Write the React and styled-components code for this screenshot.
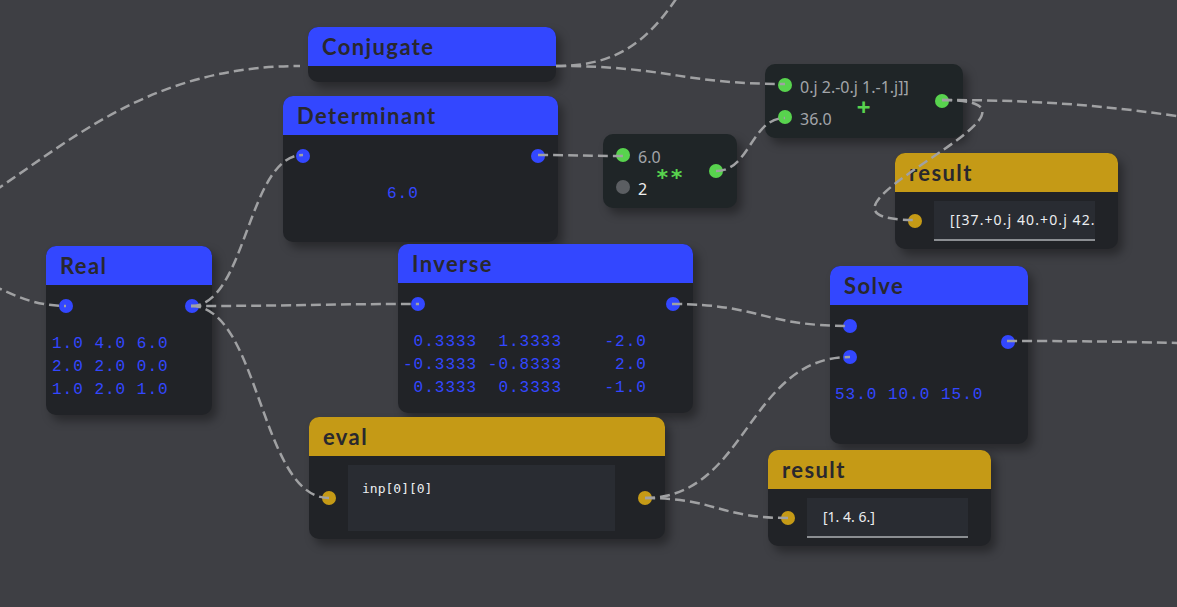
import React from 'react'
import styled, { createGlobalStyle } from 'styled-components'

const colors = {
  canvas: '#3e3f44',
  body: '#212327',
  op: '#1f2527',
  blue: '#3347ff',
  gold: '#c59a16',
  green: '#58d34e',
  grey: '#5b5e62',
  title: '#29282e',
  wire: '#a0a1a3',
  field: '#292c32',
}

const GlobalStyle = createGlobalStyle`
  html, body {
    margin: 0;
    padding: 0;
    background: ${colors.canvas};
  }
  body {
    font-family: 'Noto Sans', sans-serif;
  }
`

const Canvas = styled.div`
  position: relative;
  width: 1177px;
  height: 607px;
  overflow: hidden;
  background: ${colors.canvas};
`

const NodeBox = styled.div`
  position: absolute;
  left: ${({ $x }) => $x}px;
  top: ${({ $y }) => $y}px;
  width: ${({ $w }) => $w}px;
  height: ${({ $h }) => $h}px;
  display: flex;
  flex-direction: column;
  background: ${({ $op }) => ($op ? colors.op : colors.body)};
  border-radius: 10px;
  overflow: hidden;
  box-shadow: 5px 6px 10px rgba(0, 0, 0, 0.35);
`

const Header = styled.div`
  flex: none;
  height: 39px;
  padding-left: 14px;
  background: ${({ $gold }) => ($gold ? colors.gold : colors.blue)};
  color: ${colors.title};
  font-family: Lato, sans-serif;
  font-weight: 700;
  font-size: 22px;
  letter-spacing: 1.4px;
  line-height: 40px;
  white-space: nowrap;
`

const Body = styled.div`
  flex: 1;
  padding-top: 14px;
`

const PortRow = styled.div`
  display: flex;
  justify-content: space-between;
  align-items: center;
  padding: 0 13px;
`

const PortColumn = styled.div`
  display: flex;
  flex-direction: column;
  gap: 17px;
`

const Port = styled.span`
  flex: none;
  width: 14px;
  height: 14px;
  border-radius: 50%;
  background: ${({ $color }) => $color};
`

const Readout = styled.pre`
  margin: 20px 0 0;
  padding-left: ${({ $indent }) => $indent}px;
  font-family: 'Liberation Mono', monospace;
  font-size: 16px;
  letter-spacing: 1px;
  line-height: 23px;
  color: ${colors.blue};
`

/* operator nodes (** and +) */
const OpBody = styled.div`
  position: relative;
  flex: 1;
  display: flex;
  align-items: center;
  justify-content: space-between;
  padding: 0 14px 0 13px;
`

const InputList = styled.div`
  display: flex;
  flex-direction: column;
  gap: 18px;
`

const InputRow = styled.div`
  display: flex;
  align-items: center;
  gap: 8px;
  height: 14px;
`

const InputLabel = styled.span`
  font-family: 'Noto Sans', sans-serif;
  font-size: 16px;
  color: ${({ $bright }) => ($bright ? '#eeeeee' : '#a3a6aa')};
  white-space: nowrap;
  margin-top: 4px;
`

const Operator = styled.div`
  position: absolute;
  inset: 0;
  display: flex;
  align-items: center;
  justify-content: center;
  padding-top: ${({ $drop }) => $drop}px;
  font-family: 'DejaVu Sans Mono', monospace;
  font-weight: 700;
  font-size: 22px;
  letter-spacing: 1px;
  color: ${colors.green};
  pointer-events: none;
`

/* field nodes (eval / result) */
const FieldBody = styled.div`
  flex: 1;
  display: flex;
  align-items: center;
  padding: 8px ${({ $right }) => $right}px 8px 13px;
`

const Field = styled.div`
  flex: ${({ $w }) => ($w ? 'none' : '1')};
  width: ${({ $w }) => ($w ? `${$w}px` : 'auto')};
  height: ${({ $h }) => $h}px;
  margin: 0 auto 0 12px;
  box-sizing: border-box;
  background: ${colors.field};
  border-bottom: ${({ $line }) => ($line ? '2px solid #8b8e92' : 'none')};
  overflow: hidden;
  white-space: nowrap;
`

const FieldText = styled.div`
  padding: ${({ $code }) => ($code ? '14px 14px' : '0 16px')};
  line-height: ${({ $code }) => ($code ? '20px' : '38px')};
  font-family: ${({ $code }) =>
    $code ? "'DejaVu Sans Mono', monospace" : "'Noto Sans', sans-serif"};
  font-size: ${({ $code }) => ($code ? '13px' : '14px')};
  letter-spacing: ${({ $track }) => $track || 0}px;
  color: #eceef0;
`

const WireLayer = styled.svg`
  position: absolute;
  left: 0;
  top: 0;
  width: 1177px;
  height: 607px;
  pointer-events: none;
`

const wires = [
  'M -200 260 C 0 260, 60 66, 300 66',
  'M 556 66 C 630 66, 660 30, 700 -40',
  'M 556 66 C 670 66, 680 84, 785 84',
  'M -90 250 C -20 270, 10 306, 66 306',
  'M 191 306 C 247 306, 247 155, 303 155',
  'M 191 306 C 300 306, 310 304, 419 304',
  'M 191 306 C 260 306, 260 498, 329 498',
  'M 538 155 C 580 155, 582 156, 624 156',
  'M 716 171 C 750 171, 751 118, 785 118',
  'M 942 100 C 1092 100, 765 220, 915 220',
  'M 942 100 C 1060 100, 1140 108, 1260 130',
  'M 672 304 C 761 304, 761 326, 850 326',
  'M 645 498 C 748 498, 747 357, 850 357',
  'M 645 498 C 717 498, 717 518, 789 518',
  'M 1007 341 C 1100 341, 1150 342, 1250 345',
]

const Node = ({ x, y, w, h, title, gold, children }) => (
  <NodeBox $x={x} $y={y} $w={w} $h={h}>
    <Header $gold={gold}>{title}</Header>
    {children}
  </NodeBox>
)

const MatrixNode = ({ x, y, w, h, title, text, indent = 5 }) => (
  <Node x={x} y={y} w={w} h={h} title={title}>
    <Body>
      <PortRow>
        <Port $color={colors.blue} />
        <Port $color={colors.blue} />
      </PortRow>
      <Readout $indent={indent}>{text}</Readout>
    </Body>
  </Node>
)

const OpNode = ({ x, y, w, inputs, op, drop }) => (
  <NodeBox $x={x} $y={y} $w={w} $h={74} $op>
    <OpBody>
      <InputList>
        {inputs.map((input) => (
          <InputRow key={input.label}>
            <Port $color={input.color} />
            <InputLabel $bright={input.bright}>{input.label}</InputLabel>
          </InputRow>
        ))}
      </InputList>
      <Port $color={colors.green} />
      <Operator $drop={drop}>{op}</Operator>
    </OpBody>
  </NodeBox>
)

const ResultNode = ({ x, y, value, track }) => (
  <Node x={x} y={y} w={223} h={96} title="result" gold>
    <FieldBody $right={23}>
      <Port $color={colors.gold} />
      <Field $h={40} $line>
        <FieldText $track={track}>{value}</FieldText>
      </Field>
    </FieldBody>
  </Node>
)

const App = () => (
  <Canvas>
    <GlobalStyle />

    <Node x={308} y={27} w={248} h={55} title="Conjugate" />

    <Node x={283} y={96} w={275} h={146} title="Determinant">
      <Body>
        <PortRow>
          <Port $color={colors.blue} />
          <Port $color={colors.blue} />
        </PortRow>
        <Readout $indent={104}>6.0</Readout>
      </Body>
    </Node>

    <MatrixNode
      x={46}
      y={246}
      w={166}
      h={169}
      title="Real"
      indent={6}
      text={'1.0 4.0 6.0\n2.0 2.0 0.0\n1.0 2.0 1.0'}
    />

    <MatrixNode
      x={398}
      y={244}
      w={295}
      h={169}
      title="Inverse"
      text={' 0.3333  1.3333    -2.0\n-0.3333 -0.8333     2.0\n 0.3333  0.3333    -1.0'}
    />

    <Node x={309} y={417} w={356} h={122} title="eval" gold>
      <FieldBody $right={13}>
        <Port $color={colors.gold} />
        <Field $w={267} $h={66}>
          <FieldText $code>inp[0][0]</FieldText>
        </Field>
        <Port $color={colors.gold} />
      </FieldBody>
    </Node>

    <OpNode
      x={603}
      y={134}
      w={134}
      op="**"
      drop={12}
      inputs={[
        { label: '6.0', color: colors.green },
        { label: '2', color: colors.grey, bright: true },
      ]}
    />

    <OpNode
      x={765}
      y={64}
      w={198}
      op="+"
      drop={10}
      inputs={[
        { label: '0.j 2.-0.j 1.-1.j]]', color: colors.green },
        { label: '36.0', color: colors.green },
      ]}
    />

    <ResultNode x={895} y={153} value="[[37.+0.j 40.+0.j 42.+0.j]" track={1.1} />

    <Node x={830} y={266} w={198} h={178} title="Solve">
      <Body>
        <PortRow>
          <PortColumn>
            <Port $color={colors.blue} />
            <Port $color={colors.blue} />
          </PortColumn>
          <Port $color={colors.blue} />
        </PortRow>
        <Readout $indent={5}>53.0 10.0 15.0</Readout>
      </Body>
    </Node>

    <ResultNode x={768} y={450} value="[1. 4. 6.]" />

    <WireLayer viewBox="0 0 1177 607">
      {wires.map((d) => (
        <path
          key={d}
          d={d}
          fill="none"
          stroke={colors.wire}
          strokeWidth="2.5"
          strokeDasharray="10 5"
        />
      ))}
    </WireLayer>
  </Canvas>
)

export default App
